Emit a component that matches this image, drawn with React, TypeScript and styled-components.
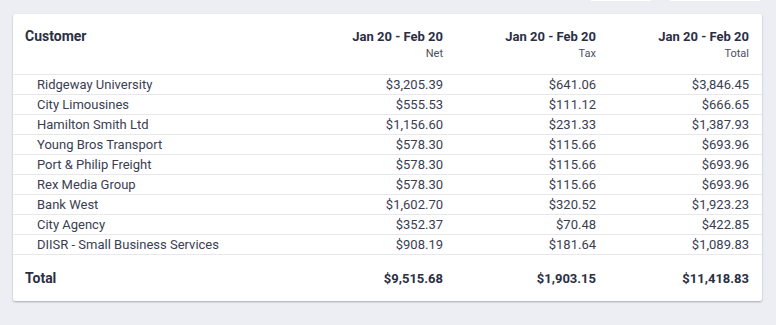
import styled, { createGlobalStyle } from "styled-components";

const GlobalStyle = createGlobalStyle`
  body {
    margin: 0;
    background: #edeef3;
    font-family: Roboto, "Liberation Sans", sans-serif;
    color: #2e3246;
  }
`;

const Page = styled.div`
  padding: 0 14px 24px 13px;
`;

const Toolbar = styled.div`
  display: flex;
  justify-content: flex-end;
  gap: 19px;
  height: 1px;
  padding-right: 2px;
  margin-bottom: 13px;
`;

const ToolButton = styled.div<{ $width: number }>`
  width: ${(p) => p.$width}px;
  height: 1px;
  background: #ffffff;
`;

const Card = styled.div`
  background: #ffffff;
  border-radius: 2px;
  box-shadow: 0 1px 2px rgba(40, 44, 60, 0.35);
`;

const Row = styled.div<{ $variant?: "head" | "total" }>`
  display: grid;
  grid-template-columns: 1fr 153px 153px 153px;
  box-sizing: border-box;
  padding: 0 13px 0 12px;
  align-items: ${(p) => (p.$variant === "head" ? "start" : "center")};
  height: ${(p) => (p.$variant === "head" ? "61px" : p.$variant === "total" ? "46px" : "20px")};
  padding-top: ${(p) => (p.$variant === "head" ? "14px" : "0")};
  border-bottom: ${(p) => (p.$variant === "total" ? "none" : "1px solid #e7e8ec")};
  font-size: 13px;
`;

const HeadCell = styled.div<{ $right?: boolean }>`
  display: flex;
  flex-direction: column;
  align-items: ${(p) => (p.$right ? "flex-end" : "flex-start")};
  font-size: ${(p) => (p.$right ? "13px" : "14px")};
  font-weight: 700;
  line-height: 17px;
  color: #2b2f44;
`;

const SubLabel = styled.span`
  font-size: 11px;
  font-weight: 400;
  line-height: 17px;
  color: #4a4e60;
`;

const NameCell = styled.div`
  padding-left: 12px;
  color: #3a3e52;
`;

const AmountCell = styled.div`
  text-align: right;
  color: #3a3e52;
`;

const TotalLabel = styled.div`
  font-size: 14px;
  font-weight: 700;
  color: #2b2f44;
`;

const TotalAmount = styled.div`
  text-align: right;
  font-weight: 700;
  color: #2b2f44;
`;

const rows = [
  ["Ridgeway University", "$3,205.39", "$641.06", "$3,846.45"],
  ["City Limousines", "$555.53", "$111.12", "$666.65"],
  ["Hamilton Smith Ltd", "$1,156.60", "$231.33", "$1,387.93"],
  ["Young Bros Transport", "$578.30", "$115.66", "$693.96"],
  ["Port & Philip Freight", "$578.30", "$115.66", "$693.96"],
  ["Rex Media Group", "$578.30", "$115.66", "$693.96"],
  ["Bank West", "$1,602.70", "$320.52", "$1,923.23"],
  ["City Agency", "$352.37", "$70.48", "$422.85"],
  ["DIISR - Small Business Services", "$908.19", "$181.64", "$1,089.83"],
];

const columns = ["Net", "Tax", "Total"];

export default function App() {
  return (
    <>
      <GlobalStyle />
      <Page>
        <Toolbar>
          <ToolButton $width={60} />
          <ToolButton $width={90} />
        </Toolbar>
        <Card>
          <Row $variant="head">
            <HeadCell>Customer</HeadCell>
            {columns.map((c) => (
              <HeadCell key={c} $right>
                Jan 20 - Feb 20
                <SubLabel>{c}</SubLabel>
              </HeadCell>
            ))}
          </Row>
          {rows.map(([name, net, tax, total]) => (
            <Row key={name}>
              <NameCell>{name}</NameCell>
              <AmountCell>{net}</AmountCell>
              <AmountCell>{tax}</AmountCell>
              <AmountCell>{total}</AmountCell>
            </Row>
          ))}
          <Row $variant="total">
            <TotalLabel>Total</TotalLabel>
            <TotalAmount>$9,515.68</TotalAmount>
            <TotalAmount>$1,903.15</TotalAmount>
            <TotalAmount>$11,418.83</TotalAmount>
          </Row>
        </Card>
      </Page>
    </>
  );
}
